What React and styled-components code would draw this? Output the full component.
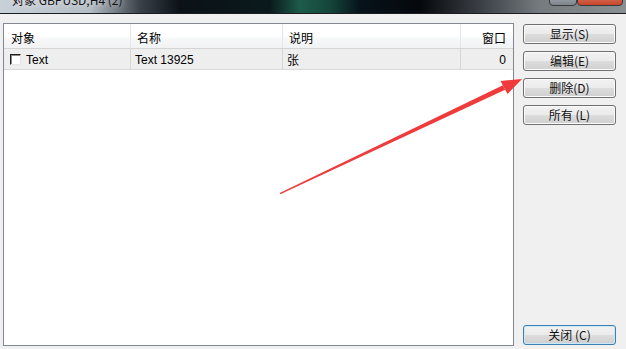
import React from "react";
import styled, { createGlobalStyle } from "styled-components";

const GlobalStyle = createGlobalStyle`
  html, body {
    margin: 0;
    padding: 0;
    background: #f0f0f0;
  }
  body {
    font-family: "Liberation Sans", "Noto Sans CJK SC", sans-serif;
    font-size: 12px;
    color: #000;
  }
`;

const Window = styled.div`
  position: relative;
  width: 626px;
  height: 349px;
  display: flex;
  flex-direction: column;
  overflow: hidden;
  background: #f0f0f0;
`;

const TitleBar = styled.div`
  height: 13px;
  display: flex;
  align-items: flex-start;
  justify-content: space-between;
  overflow: hidden;
  border-bottom: 1px solid #1b1d20;
  background: linear-gradient(
    90deg,
    #c9d1d8 0px,
    #b4bcc4 90px,
    #3a4148 140px,
    #0b1117 180px,
    #0a1a1c 270px,
    #1d5b4a 300px,
    #14463a 330px,
    #07121a 360px,
    #05080c 420px,
    #3a3f45 480px,
    #767b80 540px,
    #8a8f94 626px
  );
`;

const TitleText = styled.div`
  margin: -7px 0 0 12px;
  font-family: "Noto Sans CJK SC", "Liberation Sans", sans-serif;
  font-size: 12px;
  line-height: 14px;
  color: #111;
  text-shadow: 0 0 6px rgba(255, 255, 255, 0.9);
  white-space: nowrap;
`;

const Controls = styled.div`
  display: flex;
  margin: -14px 3px 0 0;
`;

const CtlButton = styled.div`
  width: ${(p) => p.$w}px;
  height: 18px;
  border: 1px solid #3a3a3a;
  border-radius: 0 0 4px 4px;
  background: ${(p) => (p.$red ? "linear-gradient(#e8a090, #c8452a)" : "linear-gradient(#c5cad0, #7d848c)")};
`;

const Body = styled.div`
  flex: 1;
  display: flex;
  padding: 9px 9px 3px 3px;
  gap: 9px;
`;

const ListBox = styled.div`
  width: 509px;
  border: 1px solid #828790;
  background: #fff;
  display: flex;
  flex-direction: column;
`;

const Columns = "127px 152px 178px 52px";

const HeaderRow = styled.div`
  display: grid;
  grid-template-columns: ${Columns};
  height: 24px;
  background: linear-gradient(#ffffff 0%, #ffffff 50%, #f7f8f9 60%, #f1f2f4 100%);
  border-bottom: 1px solid #d5d5d5;
`;

const HeaderCell = styled.div`
  display: flex;
  align-items: center;
  justify-content: ${(p) => (p.$right ? "flex-end" : "flex-start")};
  padding: 3px 7px 0 ${(p) => (p.$first ? 7 : 6)}px;
  font-family: "Noto Sans CJK SC", "Liberation Sans", sans-serif;
  font-size: 12px;
  border-right: ${(p) => (p.$last ? "none" : "1px solid #e2e6ea")};
`;

const DataRow = styled.div`
  display: grid;
  grid-template-columns: ${Columns};
  height: 20px;
  background: #eeeeee;
  border-bottom: 1px solid #d9d9d9;
`;

const Cell = styled.div`
  display: flex;
  align-items: center;
  gap: 5px;
  justify-content: ${(p) => (p.$right ? "flex-end" : "flex-start")};
  padding: 1px 7px 0 ${(p) => (p.$first ? 6 : 4)}px;
  font-family: "Liberation Sans", "Noto Sans CJK SC", sans-serif;
  font-size: 12px;
  border-right: ${(p) => (p.$last ? "none" : "1px solid #d6d6d6")};
`;

const CheckBox = styled.span`
  width: 9px;
  height: 9px;
  background: #fff;
  border-top: 1px solid #1e1e1e;
  border-left: 1px solid #1e1e1e;
  border-right: 1px solid #e6e6e6;
  border-bottom: 1px solid #e6e6e6;
  box-shadow: inset 1px 1px 0 #8a8a8a;
`;

const ButtonColumn = styled.div`
  width: 93px;
  display: flex;
  flex-direction: column;
  gap: 7px;
  padding-top: 1px;
`;

const Button = styled.div`
  height: 18px;
  display: flex;
  align-items: center;
  justify-content: center;
  border: 1px solid ${(p) => (p.$default ? "#3c7fb1" : "#707070")};
  border-radius: 3px;
  background: linear-gradient(#f2f2f2 0%, #ebebeb 50%, #dddddd 51%, #cfcfcf 100%);
  box-shadow: inset 0 0 0 1px ${(p) => (p.$default ? "#c8e8f8" : "#fbfbfb")};
  font-family: "Noto Sans CJK SC", "Liberation Sans", sans-serif;
  font-size: 12px;
  line-height: 1;
  color: #111;
  margin-top: ${(p) => (p.$bottom ? "auto" : "0")};
  margin-bottom: ${(p) => (p.$bottom ? "1px" : "0")};
`;

const Overlay = styled.svg`
  position: absolute;
  left: 0;
  top: 0;
  pointer-events: none;
`;

const columns = [
  { label: "对象" },
  { label: "名称" },
  { label: "说明" },
  { label: "窗口", right: true },
];

const buttons = ["显示(S)", "编辑(E)", "删除(D)", "所有 (L)"];

export default function App() {
  return (
    <>
      <GlobalStyle />
      <Window>
        <TitleBar>
          <TitleText>对象 GBPUSD,H4 (2)</TitleText>
          <Controls>
            <CtlButton $w={26} />
            <CtlButton $w={44} $red />
          </Controls>
        </TitleBar>
        <Body>
          <ListBox>
            <HeaderRow>
              {columns.map((c, i) => (
                <HeaderCell key={c.label} $first={i === 0} $last={i === columns.length - 1} $right={c.right}>
                  {c.label}
                </HeaderCell>
              ))}
            </HeaderRow>
            <DataRow>
              <Cell $first>
                <CheckBox />
                Text
              </Cell>
              <Cell>Text 13925</Cell>
              <Cell style={{ fontFamily: '"Noto Sans CJK SC", sans-serif' }}>张</Cell>
              <Cell $right $last>0</Cell>
            </DataRow>
          </ListBox>
          <ButtonColumn>
            {buttons.map((b) => (
              <Button key={b}>{b}</Button>
            ))}
            <Button $bottom $default>关闭 (C)</Button>
          </ButtonColumn>
        </Body>
        <Overlay width="626" height="349" viewBox="0 0 626 349">
          <polygon
            points="279.7,193 280.3,194.2 505.1,89.8 502.9,85.2"
            fill="#ef3b3b"
          />
          <polygon points="522,79 507.5,94 500.5,81" fill="#ef3b3b" />
        </Overlay>
      </Window>
    </>
  );
}
